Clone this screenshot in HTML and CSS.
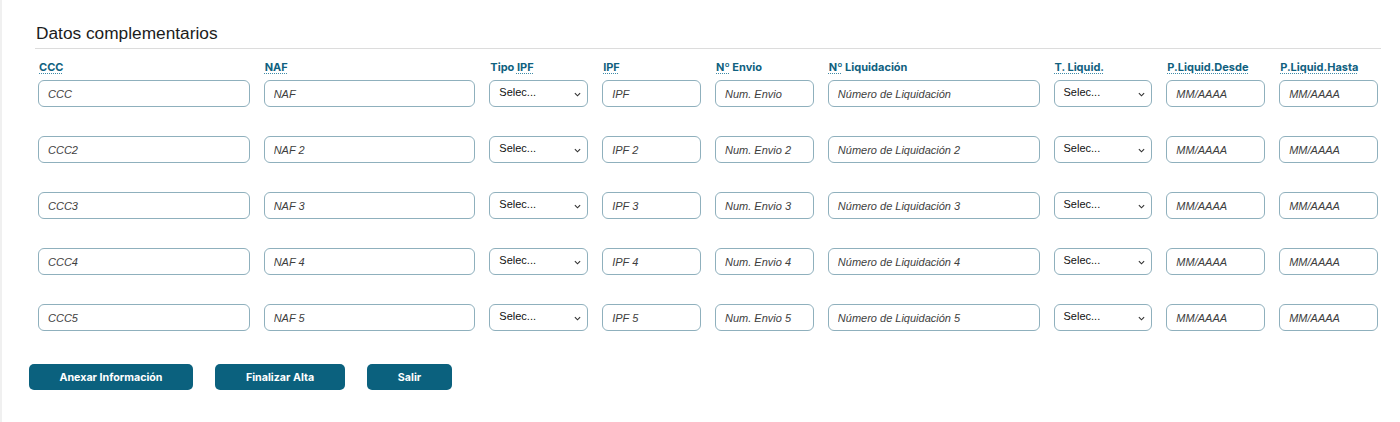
FILE: index.html
```html
<!DOCTYPE html>
<html lang="es">
<head>
<meta charset="utf-8">
<title>Datos complementarios</title>
<link rel="stylesheet" href="styles.css">
</head>
<body>
<div class="page">
  <section class="panel">
    <h2 class="title">Datos complementarios</h2>
    <div class="grid">
      <label class="lbl wide"><abbr>CCC</abbr></label>
      <label class="lbl wide"><abbr>NAF</abbr></label>
      <label class="lbl">Tipo <abbr>IPF</abbr></label>
      <label class="lbl"><abbr>IPF</abbr></label>
      <label class="lbl"><abbr>Nº</abbr> Envio</label>
      <label class="lbl wide"><abbr>Nº</abbr> Liquidación</label>
      <label class="lbl"><abbr>T. Liquid.</abbr></label>
      <label class="lbl"><abbr>P.Liquid.Desde</abbr></label>
      <label class="lbl"><abbr>P.Liquid.Hasta</abbr></label>

      <input class="inp wide" placeholder="CCC">
      <input class="inp wide" placeholder="NAF">
      <div class="sel"><span>Selec...</span><svg viewBox="0 0 8 5" class="chev"><path d="M1 1l3 3 3-3"/></svg></div>
      <input class="inp" placeholder="IPF">
      <input class="inp" placeholder="Num. Envio">
      <input class="inp wide" placeholder="Número de Liquidación">
      <div class="sel"><span>Selec...</span><svg viewBox="0 0 8 5" class="chev"><path d="M1 1l3 3 3-3"/></svg></div>
      <input class="inp" placeholder="MM/AAAA">
      <input class="inp" placeholder="MM/AAAA">

      <input class="inp wide row" placeholder="CCC2">
      <input class="inp wide row" placeholder="NAF 2">
      <div class="sel row"><span>Selec...</span><svg viewBox="0 0 8 5" class="chev"><path d="M1 1l3 3 3-3"/></svg></div>
      <input class="inp row" placeholder="IPF 2">
      <input class="inp row" placeholder="Num. Envio 2">
      <input class="inp wide row" placeholder="Número de Liquidación 2">
      <div class="sel row"><span>Selec...</span><svg viewBox="0 0 8 5" class="chev"><path d="M1 1l3 3 3-3"/></svg></div>
      <input class="inp row" placeholder="MM/AAAA">
      <input class="inp row" placeholder="MM/AAAA">

      <input class="inp wide row" placeholder="CCC3">
      <input class="inp wide row" placeholder="NAF 3">
      <div class="sel row"><span>Selec...</span><svg viewBox="0 0 8 5" class="chev"><path d="M1 1l3 3 3-3"/></svg></div>
      <input class="inp row" placeholder="IPF 3">
      <input class="inp row" placeholder="Num. Envio 3">
      <input class="inp wide row" placeholder="Número de Liquidación 3">
      <div class="sel row"><span>Selec...</span><svg viewBox="0 0 8 5" class="chev"><path d="M1 1l3 3 3-3"/></svg></div>
      <input class="inp row" placeholder="MM/AAAA">
      <input class="inp row" placeholder="MM/AAAA">

      <input class="inp wide row" placeholder="CCC4">
      <input class="inp wide row" placeholder="NAF 4">
      <div class="sel row"><span>Selec...</span><svg viewBox="0 0 8 5" class="chev"><path d="M1 1l3 3 3-3"/></svg></div>
      <input class="inp row" placeholder="IPF 4">
      <input class="inp row" placeholder="Num. Envio 4">
      <input class="inp wide row" placeholder="Número de Liquidación 4">
      <div class="sel row"><span>Selec...</span><svg viewBox="0 0 8 5" class="chev"><path d="M1 1l3 3 3-3"/></svg></div>
      <input class="inp row" placeholder="MM/AAAA">
      <input class="inp row" placeholder="MM/AAAA">

      <input class="inp wide row" placeholder="CCC5">
      <input class="inp wide row" placeholder="NAF 5">
      <div class="sel row"><span>Selec...</span><svg viewBox="0 0 8 5" class="chev"><path d="M1 1l3 3 3-3"/></svg></div>
      <input class="inp row" placeholder="IPF 5">
      <input class="inp row" placeholder="Num. Envio 5">
      <input class="inp wide row" placeholder="Número de Liquidación 5">
      <div class="sel row"><span>Selec...</span><svg viewBox="0 0 8 5" class="chev"><path d="M1 1l3 3 3-3"/></svg></div>
      <input class="inp row" placeholder="MM/AAAA">
      <input class="inp row" placeholder="MM/AAAA">
    </div>
    <div class="actions">
      <button class="btn btn-anexar">Anexar Información</button>
      <button class="btn btn-final">Finalizar Alta</button>
      <button class="btn btn-salir">Salir</button>
    </div>
  </section>
</div>
</body>
</html>
```

FILE: styles.css
```css
* { box-sizing: border-box; }
html, body {
  margin: 0;
  padding: 0;
  background: #ffffff;
}
body {
  font-family: "Liberation Sans", Arial, sans-serif;
  color: #222;
}
.page {
  width: 1400px;
  height: 422px;
  border-left: 2px solid #f0f0f0;
  overflow: hidden;
}
.panel {
  padding: 22px 19px 0 33px;
}
.title {
  margin: 0;
  padding: 0 0 4px 1px;
  font-family: "Liberation Sans", Arial, sans-serif;
  font-weight: 400;
  font-size: 17.3px;
  line-height: 22px;
  color: #1c1c1c;
  border-bottom: 1.5px solid #dcdcdc;
}
.grid {
  display: grid;
  grid-template-columns: repeat(12, 1fr);
  column-gap: 14px;
  padding: 11px 3px 0 3px;
  align-items: start;
}
.lbl {
  grid-column: span 1;
  font-family: "Inter", "Liberation Sans", sans-serif;
  font-weight: 700;
  font-size: 11px;
  line-height: 14px;
  color: #0f6180;
  padding-left: 1px;
  margin-bottom: 6px;
  white-space: nowrap;
}
.lbl abbr {
  text-decoration: underline dotted #3f8aa6;
  text-underline-offset: 2px;
  text-decoration-thickness: 1px;
}
.wide { grid-column: span 2; }
.inp, .sel {
  height: 27px;
  border: 1px solid #8fb0bd;
  border-radius: 6px;
  background: #fff;
  font-family: "Liberation Sans", Arial, sans-serif;
  font-size: 11px;
  margin: 0;
}
.inp {
  width: 100%;
  padding: 0 9px;
  font-style: italic;
  color: #333;
  outline: none;
}
.inp::placeholder {
  color: #3e3e3e;
  opacity: 1;
}
.sel {
  display: flex;
  align-items: center;
  justify-content: space-between;
  padding: 0 6px 3px 9px;
  color: #111;
}
.chev {
  width: 7px;
  height: 5px;
  margin-top: 5px;
  fill: none;
  stroke: #333;
  stroke-width: 1.3;
}
.row { margin-top: 29px; }
.actions {
  display: flex;
  gap: 22px;
  margin: 33px 0 0 -6px;
}
.btn {
  height: 26px;
  border: none;
  border-radius: 5px;
  background: #0b617e;
  color: #fff;
  font-family: "Inter", "Liberation Sans", sans-serif;
  font-weight: 700;
  font-size: 10.7px;
  padding: 0;
}
.btn-anexar { width: 164px; }
.btn-final { width: 130px; }
.btn-salir { width: 85px; }
```
